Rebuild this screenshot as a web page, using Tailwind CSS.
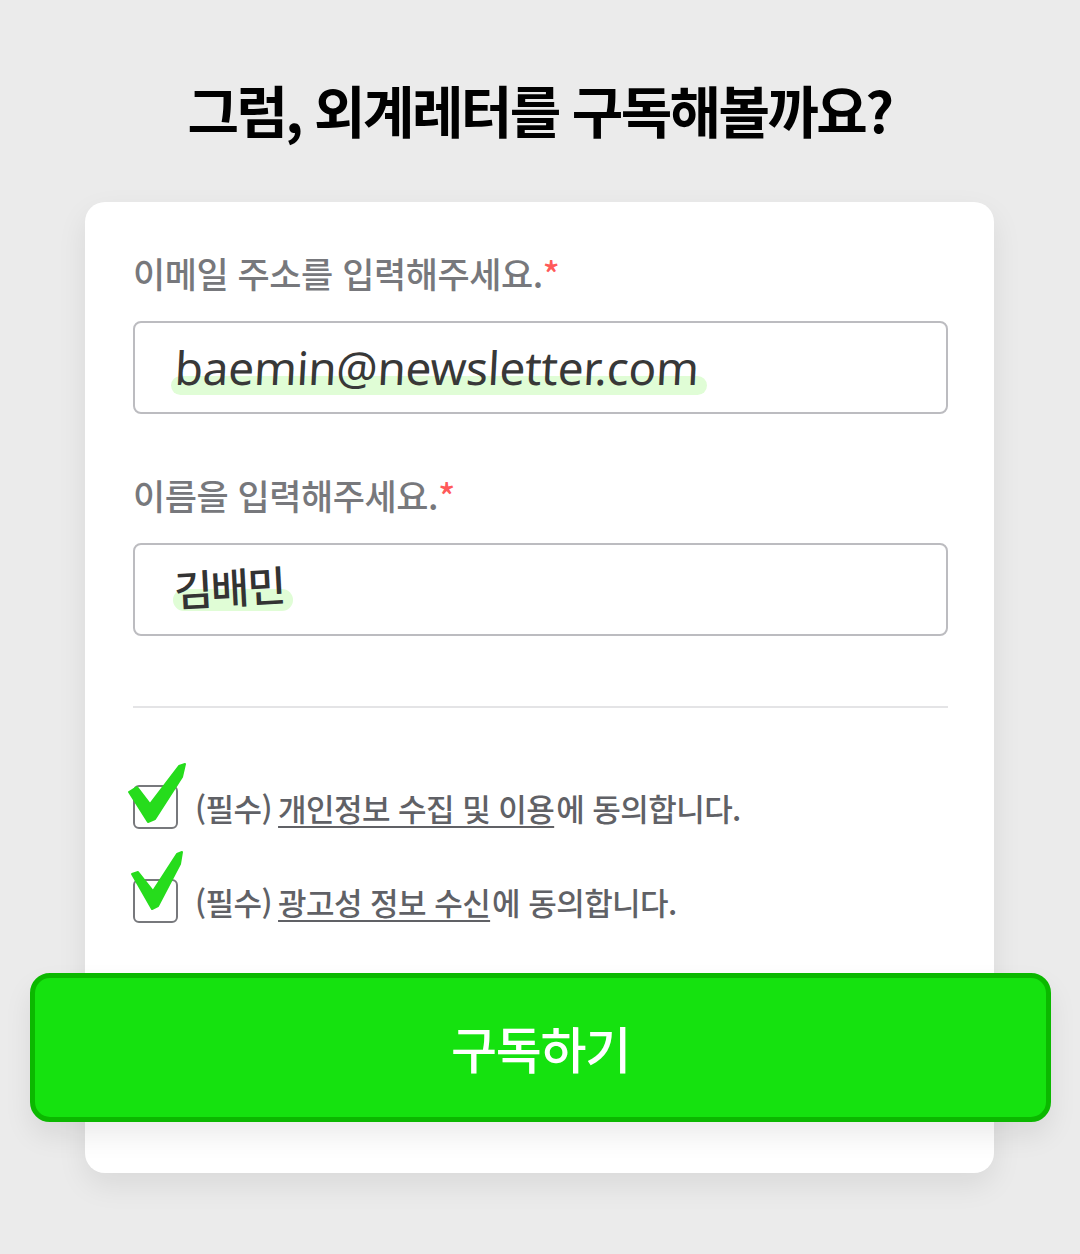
<!DOCTYPE html>
<html lang="ko">
<head>
    <meta charset="utf-8">
    <meta name="viewport" content="width=device-width, initial-scale=1">
    <title>외계레터 구독</title>
    <script src="https://cdn.jsdelivr.net/npm/@tailwindcss/browser@4"></script>
</head>
<body class="bg-[#ebebeb] h-[1254px] overflow-hidden font-['Noto_Sans_CJK_KR','Noto_Sans',sans-serif]">
    <div class="w-[1080px] pt-[70px]">
        <h1 class="text-center text-[56px] leading-[78px] font-bold tracking-[-2.6px] -ml-[1px] text-black h-[132px]">그럼, 외계레터를 구독해볼까요?</h1>

        <!-- 구독 폼 카드 -->
        <div class="ml-[85px] w-[909px] h-[971px] bg-white rounded-[20px] shadow-[0_12px_30px_rgba(0,0,0,0.08)] pl-[48px] pr-[46px] pt-[47px]">
            <label class="block text-[35px] leading-[48px] tracking-[-0.45px] font-medium text-[#77787c] h-[72px]">이메일 주소를 입력해주세요.<span class="text-[#ff5a5a]">*</span></label>
            <div class="relative h-[93px] border-2 border-[#bcbcc0] rounded-[8px] flex items-center pl-[40px]">
                <span class="absolute left-[36px] top-[53px] w-[536px] h-[19px] rounded-full bg-[#e0fdd6]"></span>
                <span class="relative text-[46px] leading-none tracking-[-0.3px] -skew-x-3 text-[#383838] font-['Noto_Sans',sans-serif] font-normal -mt-[2px] whitespace-nowrap">baemin@newsletter.com</span>
            </div>

            <label class="block mt-[57px] text-[35px] leading-[48px] tracking-[-0.45px] font-medium text-[#77787c] h-[72px]">이름을 입력해주세요.<span class="text-[#ff5a5a]">*</span></label>
            <div class="relative h-[93px] border-2 border-[#bcbcc0] rounded-[8px] flex items-center pl-[39px]">
                <span class="absolute left-[38px] top-[44px] w-[120px] h-[22px] rounded-full bg-[#e0fdd6]"></span>
                <span class="relative text-[42px] leading-none tracking-[-2px] font-medium text-[#333] -rotate-3 -mt-[8px]">김배민</span>
            </div>

            <div class="mt-[70px] h-[2px] bg-[#e4e4e6]"></div>

            <!-- 약관 동의 -->
            <div class="relative mt-[77px] flex items-center h-[46px] pl-[62px]">
                <span class="absolute left-0 top-0 w-[45px] h-[44px] border-2 border-[#77787c] rounded-[6px]"></span>
                <svg class="absolute -left-[8px] -top-[26px]" width="66" height="68" viewBox="0 0 66 68"><path d="M4 33 L12 28 L25 45 L54 7 L60 5 L57 18 L30 60 L23 63 Z" fill="#26dc1c" stroke="#26dc1c" stroke-width="2" stroke-linejoin="round"/></svg>
                <p class="text-[31px] leading-[44px] tracking-[-0.55px] font-medium text-[#606166] whitespace-nowrap">(필수) <u class="-ml-[2px] mr-[2px] underline-offset-[5px] decoration-2">개인정보 수집 및 이용</u>에 동의합니다.</p>
            </div>
            <div class="relative mt-[48px] flex items-center h-[46px] pl-[62px]">
                <span class="absolute left-0 top-0 w-[45px] h-[44px] border-2 border-[#77787c] rounded-[6px]"></span>
                <svg class="absolute -left-[8px] -top-[32px]" width="66" height="68" viewBox="0 0 66 68"><path d="M7 27 L13 25 L28 44 L52 7 L57 5 L55 17 L33 59 L27 62 Z" fill="#26dc1c" stroke="#26dc1c" stroke-width="2" stroke-linejoin="round"/></svg>
                <p class="text-[31px] leading-[44px] tracking-[-0.55px] font-medium text-[#606166] whitespace-nowrap">(필수) <u class="-ml-[2px] mr-[2px] underline-offset-[5px] decoration-2">광고성 정보 수신</u>에 동의합니다.</p>
            </div>

            <button class="block mt-[48px] -ml-[103px] w-[1021px] h-[149px] rounded-[20px] border-[5px] border-[#0bb800] bg-[#15e20f] text-white text-[50px] tracking-[-1.2px] font-medium shadow-[0_14px_28px_rgba(0,0,0,0.08)]">구독하기</button>
        </div>
    </div>
</body>
</html>
